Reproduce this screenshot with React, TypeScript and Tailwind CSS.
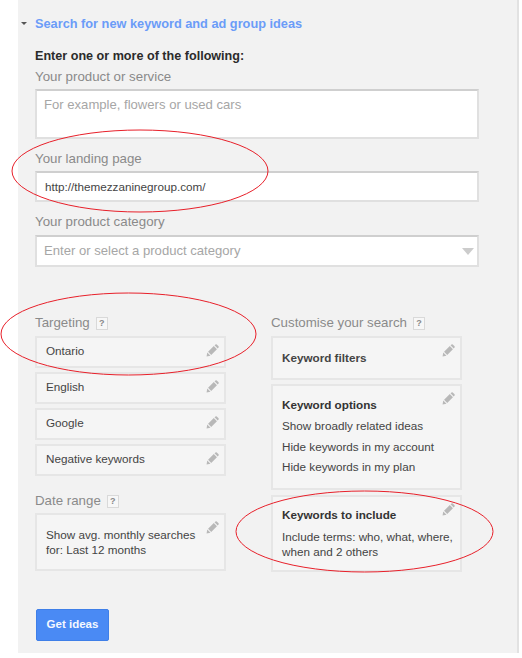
const Pencil = ({ className }: { className: string }) => (
  <svg viewBox="0 0 14 14" className={className} fill="#b8b8b8">
    <path d="M0.6 13.4 L1.4 9.2 L4.8 12.6 Z" />
    <path d="M2.2 8.4 L8.4 2.2 L11.8 5.6 L5.6 11.8 Z" />
    <path d="M9.2 1.4 L10.2 0.5 Q10.9 0 11.6 0.5 L13.5 2.4 Q14 3.1 13.5 3.8 L12.6 4.8 Z" />
  </svg>
);

const Help = () => (
  <span className="ml-[6px] inline-flex h-[13px] w-[12px] items-center justify-center border border-[#d9d9d9] bg-[#f7f7f7] text-[9px] font-bold leading-none text-[#888888]">
    ?
  </span>
);

const Label = ({ children, help }: { children: string; help?: boolean }) => (
  <div className="flex items-center text-[13.3px] leading-[16px] text-[#8a8a8a]">
    {children}
    {help && <Help />}
  </div>
);

const Chip = ({ children }: { children: string }) => (
  <div className="relative flex h-[32px] items-center border-2 border-[#e6e6e6] bg-[#f5f5f5] pb-[2px] pl-[9px] text-[11.7px] text-[#444444]">
    {children}
    <Pencil className="absolute right-[5px] top-[6px] h-[13px] w-[13px]" />
  </div>
);

const Card = ({ className, children }: { className: string; children: React.ReactNode }) => (
  <div className={`relative border-2 border-[#e6e6e6] bg-[#f5f5f5] pl-[9px] text-[11.7px] text-[#444444] ${className}`}>
    {children}
    <Pencil className="absolute right-[5px] top-[6px] h-[13px] w-[13px]" />
  </div>
);

const Ellipse = ({ cx, cy, rx, ry }: { cx: number; cy: number; rx: number; ry: number }) => (
  <ellipse cx={cx} cy={cy} rx={rx} ry={ry} fill="none" stroke="#e8202a" strokeWidth="1" />
);

export default function App() {
  return (
    <div className="relative h-[658px] w-[522px] overflow-hidden bg-white font-['Liberation_Sans',Arial,sans-serif]">
      <div className="ml-[18px] h-[653px] w-[501px] border-r-2 border-[#e2e2e2] bg-[#f2f2f2] pl-[17px] pt-[15px]">
        <div className="relative flex h-[17px] items-center text-[12.75px] font-bold text-[#6b9cf8]">
          <span className="absolute left-[-14px] top-[7px] h-0 w-0 border-x-[3px] border-t-[3px] border-x-transparent border-t-[#555555]" />
          Search for new keyword and ad group ideas
        </div>
        <div className="mt-[16px] text-[12.6px] font-bold leading-[16px] text-[#2b2b2b]">Enter one or more of the following:</div>
        <div className="mt-[5px]"><Label>Your product or service</Label></div>
        <div className="mt-[4px] h-[50px] w-[444px] border-2 border-[#e0e0e0] border-t-[#cfcfcf] bg-white pl-[7px] pt-[6px] text-[13.1px] leading-[16px] text-[#a6a6a6]">
          For example, flowers or used cars
        </div>
        <div className="mt-[12px]"><Label>Your landing page</Label></div>
        <div className="mt-[4px] flex h-[31px] w-[444px] items-center border-2 border-[#e0e0e0] border-t-[#cfcfcf] bg-white pl-[8px] text-[11.7px] text-[#444444]">
          http://themezzaninegroup.com/
        </div>
        <div className="mt-[12px]"><Label>Your product category</Label></div>
        <div className="relative mt-[5px] flex h-[32px] w-[444px] items-center border-2 border-[#e0e0e0] border-t-[#cfcfcf] bg-white pl-[7px] text-[13.1px] text-[#a6a6a6]">
          Enter or select a product category
          <span className="absolute right-[3px] top-[11px] h-0 w-0 border-x-[6px] border-t-[7px] border-x-transparent border-t-[#cccccc]" />
        </div>

        <div className="mt-[48px] flex items-start gap-[45px]">
          <div className="w-[191px]">
            <Label help>Targeting</Label>
            <div className="mt-[5px] flex flex-col gap-[4px]">
              <Chip>Ontario</Chip>
              <Chip>English</Chip>
              <Chip>Google</Chip>
              <Chip>Negative keywords</Chip>
            </div>
            <div className="mt-[17px]"><Label help>Date range</Label></div>
            <Card className="mt-[4px] h-[58px] pt-[12px] leading-[15px]">
              <div>Show avg. monthly searches</div>
              <div>for: Last 12 months</div>
            </Card>
            <button className="mt-[38px] ml-[1px] flex h-[32px] w-[73px] items-center justify-center rounded-[2px] border border-[#3f7fe8] bg-[#4a8af4] text-[11.5px] font-bold text-[#f4f8ff]">
              Get ideas
            </button>
          </div>
          <div className="w-[191px]">
            <Label help>Customise your search</Label>
            <div className="mt-[5px] flex flex-col gap-[4px]">
              <Card className="flex h-[44px] items-center font-bold text-[#333333]">Keyword filters</Card>
              <Card className="h-[106px] pt-[10px]">
                <div className="font-bold leading-[17px] text-[#333333]">Keyword options</div>
                <div className="mt-[3px] leading-[20.5px]">Show broadly related ideas</div>
                <div className="leading-[20.5px]">Hide keywords in my account</div>
                <div className="leading-[20.5px]">Hide keywords in my plan</div>
              </Card>
              <Card className="mt-[1px] h-[77px] pt-[9px]">
                <div className="font-bold leading-[17px] text-[#333333]">Keywords to include</div>
                <div className="mt-[7px] leading-[14.5px]">Include terms: who, what, where,</div>
                <div className="leading-[14.5px]">when and 2 others</div>
              </Card>
            </div>
          </div>
        </div>
      </div>
      <svg className="pointer-events-none absolute left-0 top-0" width="522" height="658">
        <Ellipse cx={140} cy={171} rx={128} ry={41} />
        <Ellipse cx={128.5} cy={334} rx={127.5} ry={41} />
        <Ellipse cx={364.5} cy={531.5} rx={128.5} ry={40.5} />
      </svg>
    </div>
  );
}
